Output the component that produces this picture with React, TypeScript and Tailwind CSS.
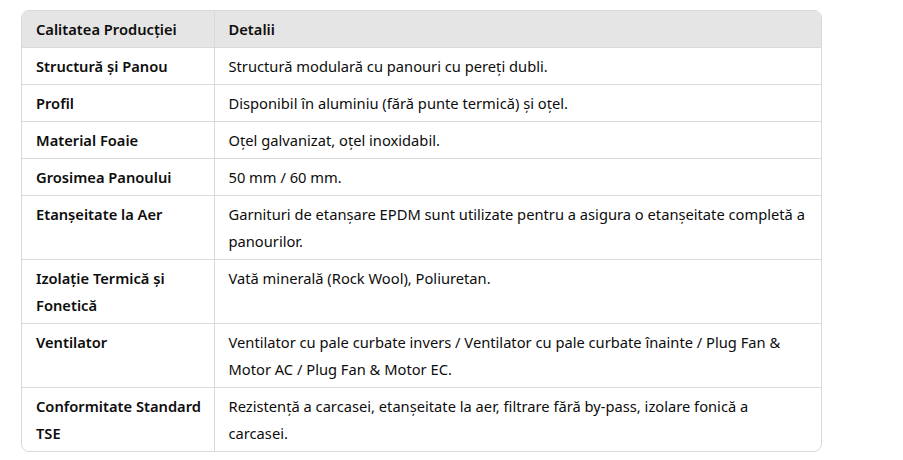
import React from 'react';

const rows: [string, string][] = [
  ['Structură și Panou', 'Structură modulară cu panouri cu pereți dubli.'],
  ['Profil', 'Disponibil în aluminiu (fără punte termică) și oțel.'],
  ['Material Foaie', 'Oțel galvanizat, oțel inoxidabil.'],
  ['Grosimea Panoului', '50 mm / 60 mm.'],
  ['Etanșeitate la Aer', 'Garnituri de etanșare EPDM sunt utilizate pentru a asigura o etanșeitate completă a panourilor.'],
  ['Izolație Termică și Fonetică', 'Vată minerală (Rock Wool), Poliuretan.'],
  ['Ventilator', 'Ventilator cu pale curbate invers / Ventilator cu pale curbate înainte / Plug Fan & Motor AC / Plug Fan & Motor EC.'],
  ['Conformitate Standard TSE', 'Rezistență a carcasei, etanșeitate la aer, filtrare fără by-pass, izolare fonică a carcasei.'],
];

export default function App() {
  return (
    <div className="w-[903px] h-[460px] bg-white pt-[10px] pl-[21px]" style={{ fontFamily: '"Noto Sans", "Open Sans", sans-serif' }}>
      <div className="w-[801px] border border-[#d9d9d9] rounded-[8px] overflow-hidden">
        <table className="w-full border-collapse text-[14.7px] leading-[27px] text-[#0d0d0d]">
          <thead>
            <tr className="bg-[#e5e5e5]">
              <th className="w-[192px] text-left font-semibold pl-[14px] pr-3 pt-[5px] pb-[4px] border-b border-r border-[#d9d9d9]">Calitatea Producției</th>
              <th className="text-left font-semibold pl-[14px] pr-3 pt-[5px] pb-[4px] border-b border-[#d9d9d9]">Detalii</th>
            </tr>
          </thead>
          <tbody>
            {rows.map(([k, v], i) => (
              <tr key={k}>
                <td className={`align-top font-semibold pl-[14px] pr-3 pt-[5px] pb-[4px] border-r border-[#d9d9d9] ${i < rows.length - 1 ? 'border-b' : ''}`}>{k}</td>
                <td className={`align-top pl-[14px] pr-[14px] pt-[5px] pb-[4px] border-[#d9d9d9] ${i < rows.length - 1 ? 'border-b' : ''}`}>{v}</td>
              </tr>
            ))}
          </tbody>
        </table>
      </div>
    </div>
  );
}
